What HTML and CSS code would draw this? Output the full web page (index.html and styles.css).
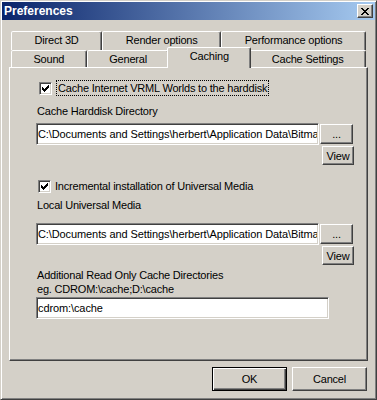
FILE: index.html
```html
<!DOCTYPE html>
<html lang="en">
<head>
  <meta charset="UTF-8">
  <title>Preferences</title>
  <link rel="stylesheet" href="styles.css">
</head>
<body>

  <div class="window">
    <div class="titlebar">
      <span class="title">Preferences</span>
      <span class="close-btn">
        <svg width="8" height="7" viewBox="0 0 8 7" shape-rendering="crispEdges"><path fill="#000" d="M0 0h2v1h-2z M6 0h2v1h-2z M1 1h2v1h-2z M5 1h2v1h-2z M2 2h4v1h-4z M3 3h2v1h-2z M2 4h4v1h-4z M1 5h2v1h-2z M5 5h2v1h-2z M0 6h2v1h-2z M6 6h2v1h-2z"/></svg>
      </span>
    </div>

    <div class="dialog-body">
      <div class="tabs">
        <div class="tab-row back">
          <div class="tab">Direct 3D</div>
          <div class="tab">Render options</div>
          <div class="tab">Performance options</div>
        </div>
        <div class="tab-row front">
          <div class="tab">Sound</div>
          <div class="tab">General</div>
          <div class="tab selected">Caching</div>
          <div class="tab">Cache Settings</div>
        </div>
      </div>

      <div class="panel">
        <div class="check-row first">
          <span class="checkbox">
            <svg width="9" height="9" viewBox="0 0 9 9" shape-rendering="crispEdges"><path fill="#000" d="M1 3h1v3h-1z M2 4h1v3h-1z M3 5h1v3h-1z M4 4h1v3h-1z M5 3h1v3h-1z M6 2h1v3h-1z M7 1h1v3h-1z"/></svg>
          </span>
          <span class="check-label focused">Cache Internet VRML Worlds to the harddisk</span>
        </div>

        <div class="field-label">Cache Harddisk Directory</div>
        <div class="path-row">
          <input class="edit path" type="text" readonly value="C:\Documents and Settings\herbert\Application Data\Bitmanagement\Cache">
          <button class="btn browse">...</button>
        </div>
        <div class="view-row">
          <button class="btn view">View</button>
        </div>

        <div class="check-row second">
          <span class="checkbox">
            <svg width="9" height="9" viewBox="0 0 9 9" shape-rendering="crispEdges"><path fill="#000" d="M1 3h1v3h-1z M2 4h1v3h-1z M3 5h1v3h-1z M4 4h1v3h-1z M5 3h1v3h-1z M6 2h1v3h-1z M7 1h1v3h-1z"/></svg>
          </span>
          <span class="check-label">Incremental installation of Universal Media</span>
        </div>

        <div class="field-label media">Local Universal Media</div>
        <div class="path-row media">
          <input class="edit path" type="text" readonly value="C:\Documents and Settings\herbert\Application Data\Bitmanagement\Media">
          <button class="btn browse">...</button>
        </div>
        <div class="view-row">
          <button class="btn view">View</button>
        </div>

        <div class="note">
          Additional Read Only Cache Directories<br>
          eg. CDROM:\cache;D:\cache
        </div>
        <input class="edit extra" type="text" readonly value="cdrom:\cache">
      </div>

      <div class="dialog-buttons">
        <button class="btn big default">OK</button>
        <button class="btn big">Cancel</button>
      </div>
    </div>
  </div>

</body>
</html>
```

FILE: styles.css
```css
body {
  margin: 0;
  font-family: "Liberation Sans", Arial, sans-serif;
  font-size: 11px;
  letter-spacing: -0.2px;
  color: #000;
  background-color: #d4d0c8;
}
.window {
  box-sizing: border-box;
  width: 377px;
  height: 400px;
  padding: 1px;
  border: 1px solid;
  border-color: #d4d0c8 #404040 #404040 #d4d0c8;
  box-shadow: inset 1px 1px #fff, inset -1px -1px #808080;
  background-color: #d4d0c8;
  display: flex;
  flex-direction: column;
}
.titlebar {
  height: 18px;
  padding: 0 2px;
  display: flex;
  align-items: center;
  justify-content: space-between;
  background: linear-gradient(to right, #0a246a, #a6caf0);
}
.title {
  color: #fff;
  font-weight: bold;
  font-size: 12px;
  letter-spacing: 0;
}
.close-btn {
  box-sizing: border-box;
  width: 16px;
  height: 14px;
  display: flex;
  align-items: center;
  justify-content: center;
  background-color: #d4d0c8;
  border: 1px solid;
  border-color: #fff #404040 #404040 #fff;
  box-shadow: inset -1px -1px #808080;
}
.dialog-body {
  flex: 1;
  padding: 11px 7px 0 7px;
  display: flex;
  flex-direction: column;
}

/* tabs */
.tabs {
  margin: 0 2px;
}
.tab-row {
  display: flex;
}
.tab-row.back {
  height: 19px;
}
.tab-row.front {
  height: 17px;
}
.tab {
  flex: 1 1 auto;
  box-sizing: border-box;
  padding-top: 2px;
  line-height: 13px;
  text-align: center;
  white-space: nowrap;
  background-color: #d4d0c8;
  border: 1px solid;
  border-bottom: 0;
  border-color: #fff #404040 transparent #fff;
  border-radius: 2px 2px 0 0;
  box-shadow: inset -1px 0 #808080;
}
.tab.selected {
  margin: -3px -2px -1px;
  position: relative;
  z-index: 1;
}

/* page */
.panel {
  box-sizing: border-box;
  height: 294px;
  padding: 12px 0 0 26px;
  border: 1px solid;
  border-color: #fff #404040 #404040 #fff;
  box-shadow: inset -1px -1px #808080;
}
.check-row {
  display: flex;
  align-items: center;
}
.check-row.first {
  height: 16px;
}
.check-row.second {
  height: 13px;
  margin-top: 15px;
}
.checkbox {
  box-sizing: border-box;
  width: 13px;
  height: 13px;
  padding: 1px;
  margin: 0 4px 0 3px;
  background-color: #fff;
  border: 1px solid;
  border-color: #808080 #fff #fff #808080;
  box-shadow: inset 1px 1px #404040, inset -1px -1px #d4d0c8;
}
.checkbox svg {
  display: block;
}
.check-row.second .checkbox {
  margin-left: 2px;
}
.check-label {
  line-height: 13px;
}
.check-label.focused {
  padding: 1px 2px;
  line-height: 14px;
  outline: 1px dotted #000;
  outline-offset: -1px;
}
.field-label {
  margin: 9px 0 0 1px;
  line-height: 13px;
}
.field-label.media {
  margin-top: 6px;
}
.path-row {
  display: flex;
  align-items: flex-start;
  margin-top: 5px;
}
.path-row.media {
  margin-top: 11px;
}
.edit {
  display: block;
  box-sizing: border-box;
  height: 22px;
  margin: 0;
  padding: 0 1px;
  font: inherit;
  letter-spacing: -0.1px;
  color: #000;
  background-color: #fff;
  border: 1px solid;
  border-color: #808080 #fff #fff #808080;
  box-shadow: inset 1px 1px #404040, inset -1px -1px #d4d0c8;
  outline: none;
}
.edit.path {
  width: 283px;
}
.edit.extra {
  width: 293px;
  margin-top: 1px;
}
.btn {
  box-sizing: border-box;
  margin: 0;
  padding: 0;
  font: inherit;
  letter-spacing: inherit;
  color: #000;
  text-align: center;
  background-color: #d4d0c8;
  border: 1px solid;
  border-color: #fff #404040 #404040 #fff;
  box-shadow: inset -1px -1px #808080;
}
.browse {
  width: 33px;
  height: 20px;
  margin: 1px 0 0 1px;
}
.view-row {
  width: 318px;
  margin-top: 1px;
  display: flex;
  justify-content: flex-end;
}
.view {
  width: 32px;
  height: 19px;
}
.note {
  margin: 3px 0 0 1px;
  line-height: 14px;
}

/* bottom buttons */
.dialog-buttons {
  margin: 6px 1px 0 0;
  display: flex;
  justify-content: flex-end;
  gap: 5px;
}
.big {
  width: 75px;
  height: 24px;
  line-height: 13px;
}
.big.default {
  border-color: #000;
  box-shadow: inset 1px 1px #fff, inset -1px -1px #404040, inset -2px -2px #808080;
}
```
